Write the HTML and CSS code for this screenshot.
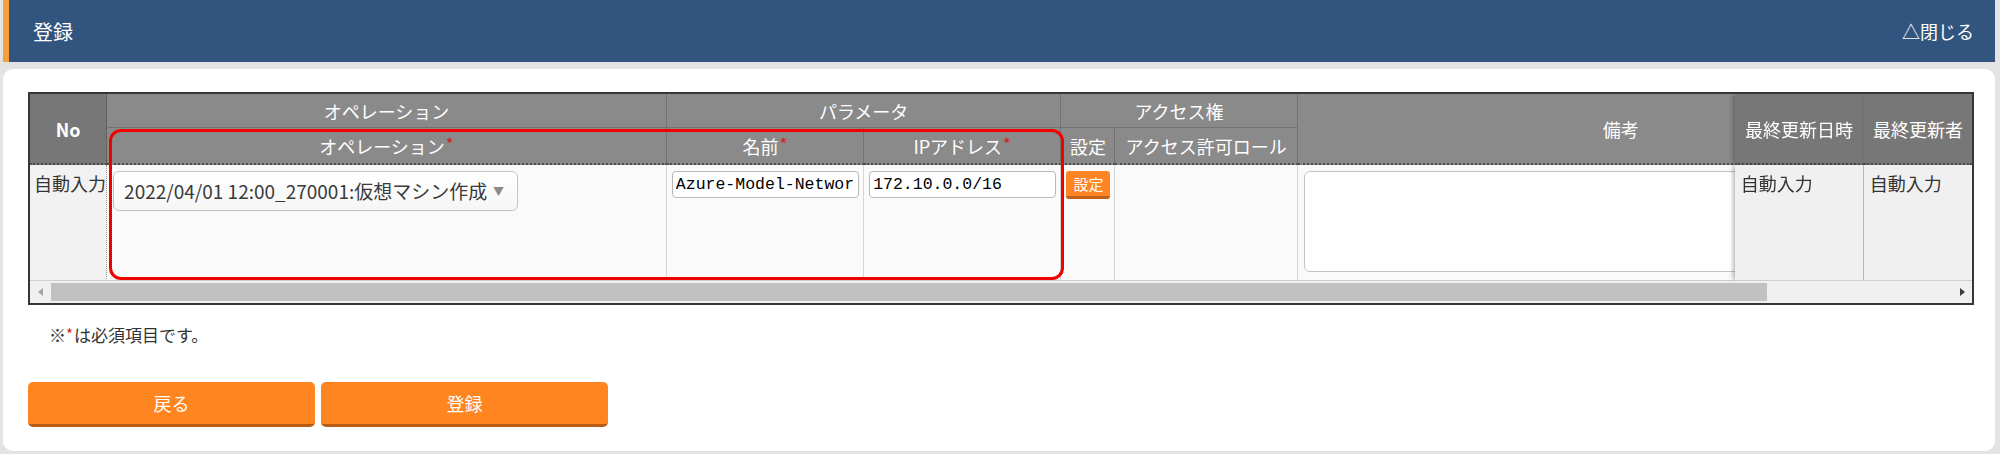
FILE: index.html
```html
<!DOCTYPE html>
<html lang="ja">
<head>
  <meta charset="UTF-8">
  <title>登録</title>
  <link rel="stylesheet" href="styles.css">
</head>
<body>

  <div class="page">
    <header class="panel-head">
      <h1 class="panel-title">登録</h1>
      <a href="" class="panel-close">△閉じる</a>
    </header>

    <section class="panel-body">
      <div class="grid">
        <div class="grid-scroll">
          <table class="grid-table">
            <colgroup>
              <col style="width: 77px">
              <col style="width: 559px">
              <col style="width: 197px">
              <col style="width: 197px">
              <col style="width: 54px">
              <col style="width: 182px">
              <col style="width: 646px">
              <col style="width: 129px">
              <col style="width: 108px">
            </colgroup>
            <thead>
              <tr class="head-1">
                <th rowspan="2" class="col-no">No</th>
                <th>オペレーション</th>
                <th colspan="2">パラメータ</th>
                <th colspan="2">アクセス権</th>
                <th rowspan="2">備考</th>
                <th rowspan="2" class="fix-1">最終更新日時</th>
                <th rowspan="2" class="fix-2">最終更新者</th>
              </tr>
              <tr class="head-2">
                <th>オペレーション<span class="req">*</span></th>
                <th>名前<span class="req">*</span></th>
                <th>IPアドレス<span class="req">*</span></th>
                <th>設定</th>
                <th>アクセス許可ロール</th>
              </tr>
            </thead>
            <tbody>
              <tr class="row">
                <td class="col-no">自動入力</td>
                <td>
                  <div class="select">
                    <span>2022/04/01 12:00_270001:仮想マシン作成</span>
                    <span class="select-caret">▼</span>
                  </div>
                </td>
                <td><input type="text" class="text-input" value="Azure-Model-Network"></td>
                <td><input type="text" class="text-input" value="172.10.0.0/16"></td>
                <td><button type="button" class="btn-mini">設定</button></td>
                <td></td>
                <td><textarea class="note-input"></textarea></td>
                <td class="fix-1">自動入力</td>
                <td class="fix-2">自動入力</td>
              </tr>
            </tbody>
          </table>
        </div>

        <div class="hscroll">
          <span class="hs-btn"><i class="hs-left"></i></span>
          <span class="hs-thumb"></span>
          <span class="hs-btn hs-end"><i class="hs-right"></i></span>
        </div>

        <!-- 必須項目の強調枠 -->
        <div class="mark-box"></div>
      </div>

      <p class="note">※<span class="req">*</span>は必須項目です。</p>

      <div class="actions">
        <button type="button" class="btn">戻る</button>
        <button type="button" class="btn">登録</button>
      </div>
    </section>
  </div>

</body>
</html>
```

FILE: styles.css
```css
html, body {
  margin: 0;
  background: #e3e3e3;
}
body {
  font-family: "Noto Sans CJK JP", sans-serif;
  color: #333;
}
.page {
  padding: 0 5px 0 3px;
}

/* header */
.panel-head {
  display: flex;
  align-items: center;
  justify-content: space-between;
  height: 62px;
  box-sizing: border-box;
  padding: 0 21px 0 24px;
  border-left: 6px solid #f5a03c;
  background: #32557f;
  color: #fff;
}
.panel-title {
  margin: 0;
  font-size: 20px;
  font-weight: normal;
}
.panel-close {
  color: #fff;
  font-size: 18px;
  text-decoration: none;
}

/* body card */
.panel-body {
  margin-top: 7px;
  padding: 23px 21px 24px 25px;
  border-radius: 10px;
  background: #fff;
}

.grid {
  position: relative;
  border: 2px solid #363636;
}
.grid-scroll {
  overflow: hidden;
}
.grid-table {
  table-layout: fixed;
  width: 2152px;
  border-collapse: separate;
  border-spacing: 0;
}
.grid-table th,
.grid-table td {
  box-sizing: border-box;
  padding: 0 5px;
  font-size: 18px;
  font-weight: normal;
  line-height: 24px;
}
.grid-table th {
  background: #8a8a8a;
  color: #fff;
  border-right: 1px solid #727272;
  border-bottom: 1px solid #727272;
  white-space: nowrap;
}
.head-1 th {
  height: 34px;
}
.head-2 th {
  height: 37px;
}
.head-2 th,
.grid-table th[rowspan] {
  border-bottom: 2px dotted #4c4c4c;
}
.grid-table th.col-no,
.grid-table th.fix-1,
.grid-table th.fix-2 {
  background: #777;
}
.grid-table th.col-no {
  font-weight: bold;
  border-right: 1px dotted #4c4c4c;
}
.req {
  position: relative;
  top: -3px;
  margin-left: 1px;
  color: #d42323;
  font-size: 17px;
  line-height: 1;
}

.row td {
  height: 116px;
  padding-top: 6px;
  vertical-align: top;
  background: #fafafa;
  border-right: 1px solid #d6d6d6;
  border-bottom: 1px solid #cfcfcf;
  white-space: nowrap;
}
.row td.col-no {
  padding-left: 4px;
  background: #f2f2f2;
  border-right: 1px dotted #9a9a9a;
}

/* fixed columns on the right */
.grid-table .fix-1,
.grid-table .fix-2 {
  position: sticky;
  z-index: 1;
}
.grid-table .fix-1 {
  right: 108px;
  box-shadow: -3px 0 4px -1px rgba(0, 0, 0, 0.28);
}
.grid-table .fix-2 {
  right: 0;
  border-right: none;
}
.row td.fix-1,
.row td.fix-2 {
  padding-left: 6px;
  background: #f0f0f0;
  border-right-color: #b9b9b9;
}
.row td.fix-2 {
  border-right: none;
}

/* inputs */
.select {
  display: flex;
  align-items: center;
  justify-content: space-between;
  box-sizing: border-box;
  width: 405px;
  height: 40px;
  margin-left: 1px;
  padding: 0 13px 0 10px;
  border: 1px solid #c3c3c3;
  border-radius: 6px;
  background: linear-gradient(#fff, #f6f6f6);
  font-size: 19px;
  color: #3a3a3a;
}
.select-caret {
  font-size: 11px;
  color: #8a8a8a;
}
.text-input {
  display: block;
  box-sizing: border-box;
  width: 187px;
  height: 27px;
  margin: 0;
  padding: 0 3px;
  border: 1px solid #b8b8b8;
  border-radius: 4px;
  background: #fff;
  font-family: "Liberation Mono", monospace;
  font-size: 16.5px;
  color: #000;
}
.btn-mini {
  display: block;
  width: 44px;
  height: 28px;
  padding: 0;
  border: none;
  border-bottom: 3px solid #c35f19;
  border-radius: 3px;
  background: #ff8524;
  color: #fff;
  font-family: inherit;
  font-size: 15px;
  line-height: 1;
}
.note-input {
  display: block;
  box-sizing: border-box;
  width: 634px;
  height: 101px;
  margin: 0 0 0 1px;
  border: 1px solid #c3c3c3;
  border-radius: 6px;
  background: #fff;
  resize: none;
}

/* horizontal scrollbar */
.hscroll {
  display: flex;
  align-items: center;
  height: 22px;
  background: #f0f0f0;
}
.hs-btn {
  display: flex;
  align-items: center;
  justify-content: center;
  width: 20px;
  height: 22px;
}
.hs-end {
  margin-left: auto;
}
.hs-thumb {
  width: 1716px;
  height: 18px;
  margin-left: 1px;
  background: #c1c1c1;
}
.hs-left,
.hs-right {
  width: 0;
  height: 0;
  border-top: 4px solid transparent;
  border-bottom: 4px solid transparent;
}
.hs-left {
  border-right: 5px solid #a3a3a3;
}
.hs-right {
  border-left: 5px solid #3c3c3c;
}

.mark-box {
  position: absolute;
  top: 35px;
  left: 79px;
  width: 955px;
  height: 151px;
  box-sizing: border-box;
  border: 3px solid #f20000;
  border-radius: 12px;
  pointer-events: none;
}

.note {
  margin: 18px 0 0;
  padding-left: 21px;
  font-size: 17px;
  line-height: 24px;
  color: #333;
}
.note .req {
  top: -2px;
  margin: 0 1px 0 0;
  font-size: 15px;
}

.actions {
  display: flex;
  gap: 6px;
  margin-top: 35px;
}
.btn {
  width: 287px;
  height: 45px;
  padding: 0;
  border: none;
  border-bottom: 3px solid #b85b14;
  border-radius: 5px;
  background: #ff8521;
  color: #fff;
  font-family: inherit;
  font-size: 18px;
}
```
